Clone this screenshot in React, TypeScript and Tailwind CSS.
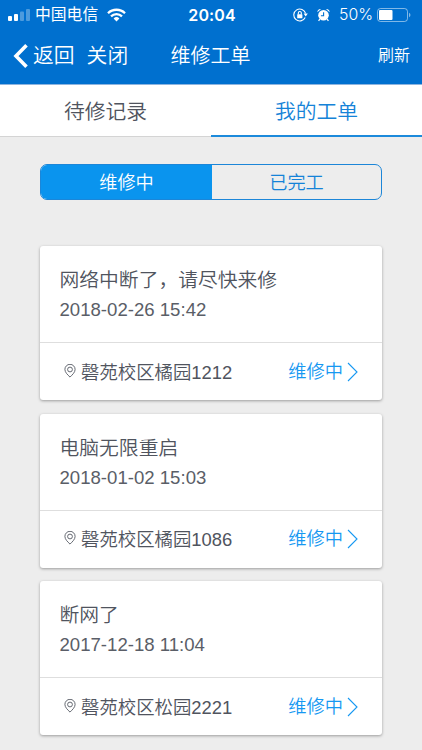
type Order = {
  title: string;
  time: string;
  place: string;
};

const orders: Order[] = [
  { title: "网络中断了，请尽快来修", time: "2018-02-26 15:42", place: "磬苑校区橘园1212" },
  { title: "电脑无限重启", time: "2018-01-02 15:03", place: "磬苑校区橘园1086" },
  { title: "断网了", time: "2017-12-18 11:04", place: "磬苑校区松园2221" },
];

function StatusBar() {
  return (
    <div className="grid h-7 grid-cols-[1fr_auto_1fr] items-center pr-[10px] pl-2 font-['Inter','Noto_Sans_CJK_SC',sans-serif]">
      <div className="flex items-center">
        <svg className="mt-px" width="22" height="12" viewBox="0 0 22 12" fill="#fff">
          <rect x="0" y="7" width="4" height="5" rx="1" />
          <rect x="6" y="5" width="4" height="7" rx="1" />
          <rect x="12" y="2.5" width="4" height="9.5" rx="1" opacity="0.3" />
          <rect x="18" y="0" width="4" height="12" rx="1" opacity="0.3" />
        </svg>
        <span className="mt-px ml-[5px] text-[15.8px] leading-7 font-normal">中国电信</span>
        <svg className="ml-[9px]" width="19" height="14" viewBox="0 0 19 14" fill="none" stroke="#fff" strokeWidth="2.3">
          <path d="M1 5.2a12.2 12.2 0 0 1 17 0" />
          <path d="M4 8.4a7.9 7.9 0 0 1 11 0" />
          <path d="M9.5 13.4 6.6 10.5a4.2 4.2 0 0 1 5.8 0z" fill="#fff" stroke="none" />
        </svg>
      </div>
      <span className="pl-1 text-[16px] font-semibold tracking-[0.1px]">20:04</span>
      <div className="flex items-center justify-end">
        <svg width="15" height="14" viewBox="0 0 15 14" fill="none" stroke="#fff" strokeWidth="1.1">
          <path d="M12.6 5.4A6 6 0 1 0 12.2 9.6" />
          <path d="M10.6 5.6h4.2L12.7 8.4z" fill="#fff" stroke="none" />
          <rect x="4.2" y="6.2" width="5.2" height="4" rx="0.5" fill="#fff" stroke="none" />
          <path d="M5.3 6.4V5a1.5 1.5 0 0 1 3 0v1.4" />
        </svg>
        <svg className="ml-[9px]" width="13" height="14" viewBox="0 0 13 14" fill="#fff">
          <circle cx="6.5" cy="7.3" r="5.3" />
          <path d="M0.4 4.2A3 3 0 0 1 4 1.1zM12.6 4.2A3 3 0 0 0 9 1.1z" />
          <path d="m2.9 11-1.3 1.9M10.1 11l1.3 1.9" stroke="#fff" strokeWidth="1.3" />
          <path d="M6.6 4.2v3.5H3.9" fill="none" stroke="#0070cf" strokeWidth="1.1" />
        </svg>
        <span className="ml-[9px] text-[15.8px] leading-7">50%</span>
        <svg className="ml-1" width="35" height="14" viewBox="0 0 35 14">
          <rect x="0.5" y="0.5" width="30" height="13" rx="3" fill="none" stroke="#fff" strokeOpacity="0.5" />
          <rect x="2" y="2" width="13.5" height="10" rx="1" fill="#fff" />
          <path d="M32 4.8c2 .8 2 3.6 0 4.4z" fill="#fff" fillOpacity="0.5" />
        </svg>
      </div>
    </div>
  );
}

function NavBar() {
  return (
    <div className="grid h-14 grid-cols-[1fr_auto_1fr] items-center pr-3 pl-[13px] text-[20px]">
      <div className="flex items-center">
        <svg width="15" height="24" viewBox="0 0 15 24" fill="none" stroke="#fff" strokeWidth="3.6">
          <path d="M13.5 1.3 3 12l10.5 10.7" />
        </svg>
        <span className="ml-[5px] text-[20.8px]">返回</span>
        <span className="ml-3 text-[20.8px]">关闭</span>
      </div>
      <span className="pr-0.5">维修工单</span>
      <span className="justify-self-end text-[16px]">刷新</span>
    </div>
  );
}

function OrderCard({ order }: { order: Order }) {
  return (
    <div className="flex h-[154px] flex-col rounded-[3px] bg-white shadow-[0_1px_3px_rgba(0,0,0,0.35)]">
      <div className="h-24 pt-[19px] pl-[19.5px]">
        <div className="text-[19.8px] leading-[30px]">{order.title}</div>
        <div className="text-[18.6px] leading-[29px] text-[#5a5e67]">{order.time}</div>
      </div>
      <div className="flex flex-1 items-center border-t border-[#dedede] pr-[24px] pl-6">
        <svg className="-mt-0.5 shrink-0" width="12" height="14" viewBox="0 0 12 14" fill="none" stroke="#555963" strokeWidth="0.9">
          <path d="M6 13.1C3.4 10.5.9 8.3.9 5.4a5.1 5.1 0 0 1 10.2 0c0 2.9-2.5 5.1-5.1 7.7z" />
          <circle cx="6" cy="5.5" r="2.4" />
        </svg>
        <span className="mt-0.5 ml-[5px] text-[18.4px]">{order.place}</span>
        <span className="ml-auto text-[18.3px] text-[#1698f2]">维修中</span>
        <svg className="ml-1 shrink-0" width="11" height="20" viewBox="0 0 11 20" fill="none" stroke="#1698f2" strokeWidth="1.1">
          <path d="M1 1l9 9-9 9" />
        </svg>
      </div>
    </div>
  );
}

export default function App() {
  return (
    <div className="flex h-[750px] w-[422px] flex-col overflow-hidden bg-[#ededed] font-['Liberation_Sans','Noto_Sans_CJK_SC',sans-serif] font-[350] text-[#50545e]">
      <header className="h-[85px] shrink-0 border-b border-[#8db4df] bg-[#0070cf] text-white">
        <StatusBar />
        <NavBar />
      </header>

      <div className="grid h-[52px] shrink-0 grid-cols-2 bg-white text-center text-[20.8px] leading-[53px]">
        <div className="h-[52px] border-b border-[#d4d4d4]">待修记录</div>
        <div className="h-[52px] border-b-2 border-[#1c8adb] text-[#1583d8]">我的工单</div>
      </div>

      <div className="mx-10 mt-[27px] flex h-9 shrink-0 overflow-hidden rounded-[7px] border border-[#1c86d8] text-center text-[18.2px] leading-[36px]">
        <div className="w-[171px] bg-[#0a94ee] text-white">维修中</div>
        <div className="flex-1 text-[#1583d8]">已完工</div>
      </div>

      <div className="mx-10 mt-[46px] flex flex-col gap-[13.5px]">
        {orders.map((order) => (
          <OrderCard key={order.time} order={order} />
        ))}
      </div>
    </div>
  );
}
